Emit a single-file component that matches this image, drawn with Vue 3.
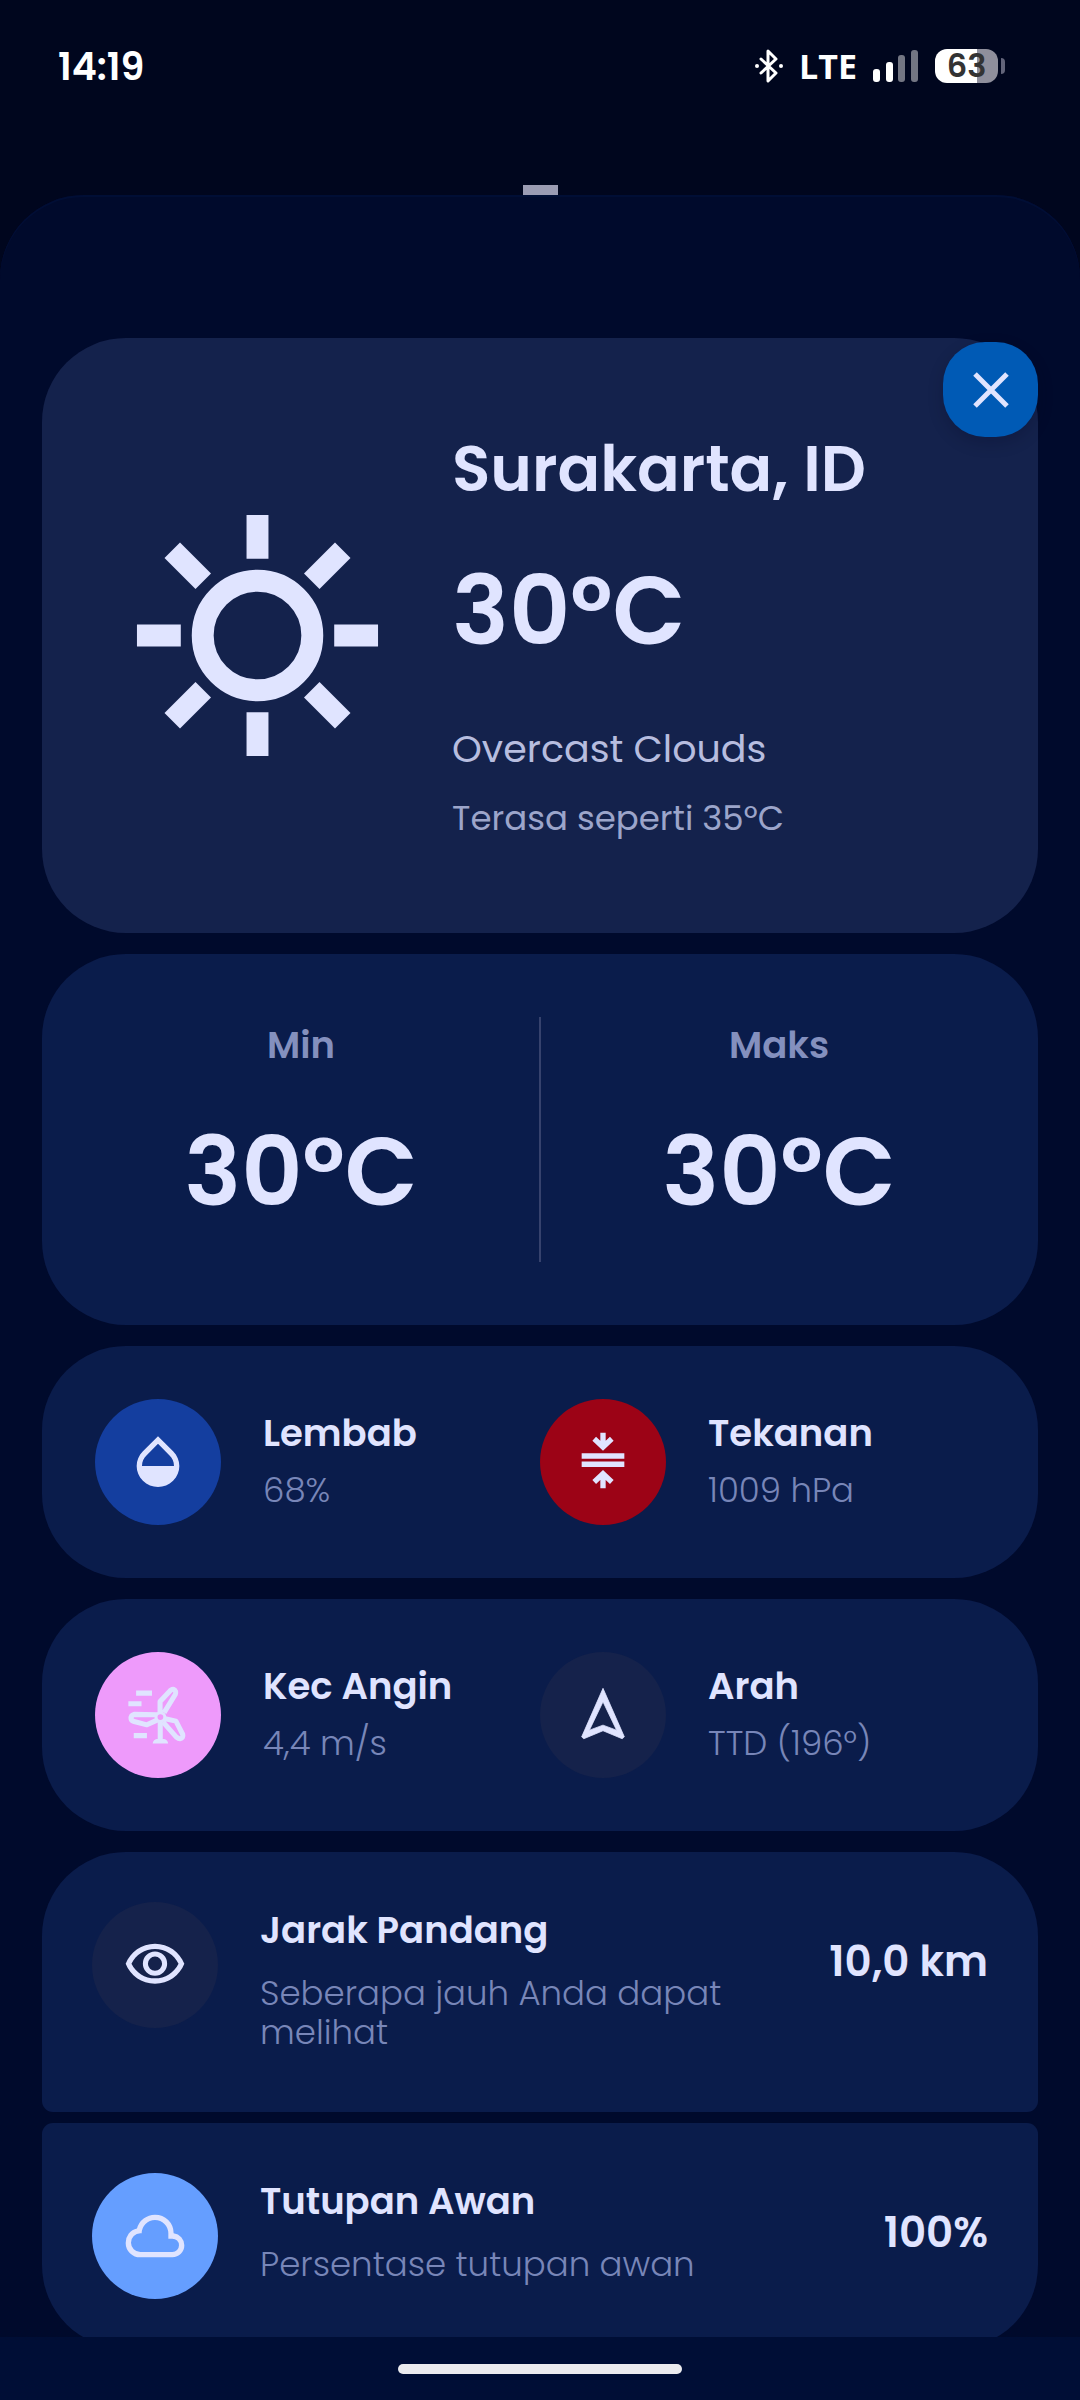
<script setup>
const pairs = [
  [
    { label: 'Lembab', value: '68%', icon: 'drop', tone: 'blue' },
    { label: 'Tekanan', value: '1009 hPa', icon: 'pressure', tone: 'red' },
  ],
  [
    { label: 'Kec Angin', value: '4,4 m/s', icon: 'wind', tone: 'pink' },
    { label: 'Arah', value: 'TTD (196°)', icon: 'direction', tone: 'dim' },
  ],
]

const details = [
  { label: 'Jarak Pandang', note: 'Seberapa jauh Anda dapat melihat', value: '10,0 km', icon: 'eye', tone: 'dim' },
  { label: 'Tutupan Awan', note: 'Persentase tutupan awan', value: '100%', icon: 'cloud', tone: 'sky' },
]

const range = [
  { label: 'Min', value: '30°C' },
  { label: 'Maks', value: '30°C' },
]

const icons = {
  drop: '<path d="M17.66 8L12 2.35 6.34 8C4.78 9.56 4 11.5 4 13.5s.78 4 2.34 5.56S9.95 21.4 12 21.4s4.1-.78 5.66-2.34S20 15.5 20 13.5 19.22 9.56 17.66 8zM6 13.5c.01-1.8.62-2.9 1.76-4L12 5.2l4.24 4.3c1.14 1.1 1.75 2.2 1.76 4H6z"/>',
  pressure: '<path d="M4 8.7h16v2.1H4zM4 11.8h16v2.1H4z"/><path d="M12 1v5M8.7 3.3L12 6.4l3.3-3.1M12 21.8v-5M8.7 19.5l3.3-3.1 3.3 3.1" fill="none" stroke="currentColor" stroke-width="2"/>',
  wind: '<g transform="scale(.1265)"><path d="M30 22h47v16H30zM7 54h39v15H7zM23 148h39v16H23zM94 112h15v55H94zM79 179q1-12 16-14h14q15 2 16 14z"/><g fill="none" stroke="currentColor" stroke-width="15" stroke-linejoin="round"><path d="M101 90V55l32-34q10-6 14 4 1 4-1 9l-33 54M92 94l-68-1q-10 3-9 13 1 6 9 8l38 10 30-14M113 105l35 8 20 39q3 11-8 13-5 0-10-4l-40-45"/><circle cx="102" cy="101" r="13" stroke-width="9"/></g></g>',
  direction: '<path d="M12 7.05l5.1 10.65L12 15.8l-5.1 1.9L12 7.05M12 2L4 20.2l.8.7 7.2-3 7.2 3 .8-.7z" stroke="currentColor" stroke-width=".3"/>',
  eye: '<path d="M12 6c3.79 0 7.17 2.13 8.82 5.5C19.17 14.87 15.79 17 12 17s-7.17-2.13-8.82-5.5C4.83 8.13 8.21 6 12 6m0-2C7 4 2.73 7.11 1 11.5 2.73 15.89 7 19 12 19s9.27-3.11 11-7.5C21.27 7.11 17 4 12 4z"/><circle cx="12" cy="11.5" r="3.6" fill="none" stroke="currentColor" stroke-width="1.9"/>',
  cloud: '<path d="M6.5 20q-2.28 0-3.89-1.57Q1 16.85 1 14.58q0-1.95 1.17-3.48 1.18-1.53 3.08-1.95.63-2.3 2.5-3.72Q9.63 4 12 4q2.93 0 4.96 2.04Q19 8.07 19 11q1.73.2 2.86 1.49Q23 13.78 23 15.5q0 1.88-1.31 3.19Q20.38 20 18.5 20zm0-2h12q1.05 0 1.77-.73.73-.72.73-1.77t-.73-1.77Q19.55 13 18.5 13H17v-2q0-2.07-1.46-3.54Q14.08 6 12 6 9.93 6 8.46 7.46 7 8.93 7 11h-.5q-1.45 0-2.47 1.03Q3 13.05 3 14.5t1.03 2.48Q5.05 18 6.5 18z"/>',
}

const rays = [0, 45, 90, 135, 180, 225, 270, 315]
</script>

<template>
  <div class="screen">
    <header class="status">
      <span class="time">14:19</span>
      <div class="indicators">
        <svg class="bluetooth" viewBox="0 0 28 34" aria-label="Bluetooth">
          <path d="M6 10l15 14-8 8V2l8 8L6 24" fill="none" stroke="currentColor" stroke-width="3" stroke-linejoin="round" stroke-linecap="round" />
          <circle cx="2" cy="17" r="2" /><circle cx="26" cy="17" r="2" />
        </svg>
        <span class="network">LTE</span>
        <svg class="signal" viewBox="0 0 46 34" aria-label="Signal">
          <rect x="0" y="20" width="7" height="13" rx="3" />
          <rect x="13" y="13" width="7" height="20" rx="3" />
          <rect x="25" y="6" width="7" height="27" rx="3" opacity=".45" />
          <rect x="38" y="1" width="7" height="32" rx="3" opacity=".45" />
        </svg>
        <div class="battery"><span class="level">63</span><span class="tip"></span></div>
      </div>
    </header>

    <div class="handle"></div>

    <main class="sheet">
      <section class="card hero">
        <svg class="sun" viewBox="0 0 24 24" aria-hidden="true">
          <circle cx="12" cy="12" r="5" />
          <path v-for="angle in rays" :key="angle" d="M12 1v4" :transform="`rotate(${angle} 12 12)`" />
        </svg>
        <div class="summary">
          <h1 class="place">Surakarta, ID</h1>
          <p class="temp">30°C</p>
          <p class="condition">Overcast Clouds</p>
          <p class="feels">Terasa seperti 35°C</p>
        </div>
        <button class="close" type="button" aria-label="Tutup">
          <svg viewBox="0 0 36 36" aria-hidden="true"><path d="M2 2l32 32M34 2L2 34" /></svg>
        </button>
      </section>

      <section class="card range">
        <div v-for="item in range" :key="item.label" class="bound">
          <h2 class="bound-label">{{ item.label }}</h2>
          <p class="temp">{{ item.value }}</p>
        </div>
      </section>

      <section v-for="(pair, i) in pairs" :key="i" class="card pair">
        <div v-for="item in pair" :key="item.label" class="metric">
          <span class="badge" :class="item.tone">
            <svg viewBox="0 0 24 24" aria-hidden="true" v-html="icons[item.icon]"></svg>
          </span>
          <div class="metric-text">
            <h2 class="title">{{ item.label }}</h2>
            <p class="reading">{{ item.value }}</p>
          </div>
        </div>
      </section>

      <div class="details">
        <section v-for="item in details" :key="item.label" class="card detail">
          <span class="badge" :class="item.tone">
            <svg viewBox="0 0 24 24" aria-hidden="true" v-html="icons[item.icon]"></svg>
          </span>
          <div class="detail-text">
            <h2 class="title">{{ item.label }}</h2>
            <p class="note">{{ item.note }}</p>
          </div>
          <span class="amount">{{ item.value }}</span>
        </section>
      </div>
    </main>

    <div class="nav"><span class="pill"></span></div>
  </div>
</template>

<style>
body {
  margin: 0;
  background: #00061e;
}
</style>

<style scoped>
.screen {
  display: flex;
  flex-direction: column;
  min-height: 100vh;
  color: #e0e4ff;
  font-family: Poppins, Inter, sans-serif;
}
h1,
h2,
p {
  margin: 0;
}
.status {
  display: flex;
  justify-content: space-between;
  align-items: center;
  box-sizing: border-box;
  height: 132px;
  padding: 0 75px 0 58px;
  color: #fff;
}
.time {
  font-size: 38px;
  font-weight: 600;
}
.indicators {
  display: flex;
  align-items: center;
  gap: 16px;
}
.indicators svg {
  height: 34px;
  fill: currentColor;
}
.bluetooth {
  width: 28px;
}
.signal {
  width: 46px;
}
.network {
  font-family: "Open Sans", sans-serif;
  font-size: 34px;
  font-weight: 700;
  line-height: 34px;
}
.battery {
  display: flex;
  align-items: center;
  gap: 3px;
}
.level {
  width: 63px;
  border-radius: 12px;
  background: linear-gradient(90deg, #fff 67%, #8f8f9c 67%);
  color: #333;
  font-size: 32px;
  font-weight: 600;
  line-height: 34px;
  text-align: center;
}
.tip {
  width: 4px;
  height: 16px;
  border-radius: 0 4px 4px 0;
  background: #62647a;
}
.handle {
  align-self: center;
  width: 35px;
  height: 10px;
  margin-top: 53px;
  background: #9b9cb3;
}
.sheet {
  display: flex;
  flex: 1;
  flex-direction: column;
  gap: 21px;
  padding: 143px 42px 51px;
  border-radius: 84px 84px 0 0;
  background: #000a2c;
  box-shadow: inset 0 2px 0 #000e35;
}
.card {
  border-radius: 84px;
  background: #0a1c4b;
}
.hero {
  position: relative;
  display: flex;
  align-items: center;
  gap: 63px;
  padding: 93px 84px;
  background: #14224c;
}
.sun {
  flex: none;
  width: 263px;
  height: 263px;
  fill: none;
  stroke: currentColor;
  stroke-width: 2;
}
.place {
  font-size: 63px;
  font-weight: 600;
  line-height: 76px;
}
.temp {
  font-size: 95px;
  font-weight: 600;
  line-height: 116px;
}
.hero .temp {
  margin: 46px 0 53px;
}
.condition {
  color: #b7bddf;
  font-size: 38px;
  line-height: 54px;
}
.feels {
  margin-top: 20px;
  color: #9ca5ca;
  font-size: 34px;
  line-height: 44px;
}
.close {
  position: absolute;
  top: 4px;
  right: 0;
  display: flex;
  align-items: center;
  justify-content: center;
  width: 95px;
  height: 95px;
  padding: 0;
  border: 0;
  border-radius: 42px;
  background: #005ab5;
  box-shadow: 0 6px 16px rgba(0, 6, 32, 0.2);
  color: inherit;
}
.close svg {
  width: 36px;
  height: 36px;
  fill: none;
  stroke: currentColor;
  stroke-width: 5;
}
.range {
  display: flex;
  padding: 63px 21px;
}
.bound {
  flex: 1;
  padding-bottom: 32px;
  text-align: center;
}
.bound:first-child {
  border-right: 2px solid #36426d;
}
.bound-label {
  margin-bottom: 41px;
  color: #8490be;
  font-size: 37px;
  font-weight: 600;
  line-height: 56px;
}
.pair {
  display: grid;
  grid-template-columns: 1fr 1fr;
  padding: 53px;
}
.metric {
  display: flex;
  align-items: center;
  gap: 42px;
}
.badge {
  display: flex;
  flex: none;
  align-items: center;
  justify-content: center;
  width: 126px;
  height: 126px;
  border-radius: 50%;
}
.badge svg {
  width: 64px;
  height: 64px;
  fill: currentColor;
}
.blue {
  background: #143e9f;
}
.red {
  background: #9c0316;
}
.pink {
  background: #ee9afb;
}
.dim {
  background: #15224b;
}
.sky {
  background: #659eff;
}
.title {
  font-size: 37px;
  font-weight: 600;
  line-height: 48px;
}
.reading {
  margin-top: 8px;
  color: #7886b8;
  font-size: 34px;
  font-weight: 300;
  line-height: 50px;
}
.details {
  display: flex;
  flex-direction: column;
  gap: 11px;
}
.detail {
  display: flex;
  align-items: flex-start;
  gap: 42px;
  padding: 50px;
}
.detail:first-child {
  border-radius: 84px 84px 11px 11px;
}
.detail:last-child {
  border-radius: 11px 11px 84px 84px;
}
.detail-text {
  flex: 1;
  padding: 4px 0 10px;
}
.note {
  margin-top: 20px;
  color: #7886b8;
  font-size: 34px;
  font-weight: 300;
  line-height: 39px;
}
.amount {
  font-size: 42px;
  font-weight: 600;
  line-height: 120px;
  white-space: nowrap;
}
.nav {
  position: fixed;
  right: 0;
  bottom: 0;
  left: 0;
  display: flex;
  align-items: center;
  justify-content: center;
  height: 63px;
  background: #000e36;
}
.pill {
  width: 284px;
  height: 10px;
  border-radius: 5px;
  background: #ebebef;
}
</style>
